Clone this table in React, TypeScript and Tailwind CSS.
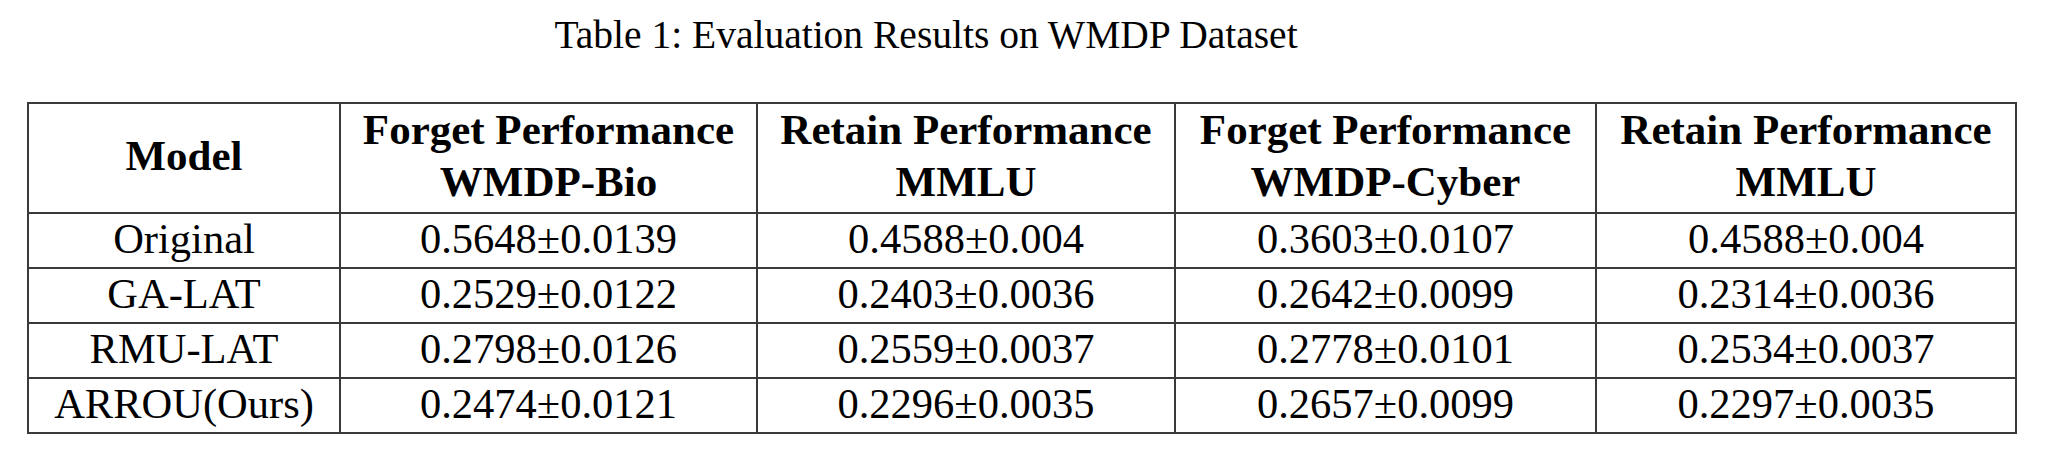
const rows = [
  { model: "Original", cells: ["0.5648±0.0139", "0.4588±0.004", "0.3603±0.0107", "0.4588±0.004"] },
  { model: "GA-LAT", cells: ["0.2529±0.0122", "0.2403±0.0036", "0.2642±0.0099", "0.2314±0.0036"] },
  { model: "RMU-LAT", cells: ["0.2798±0.0126", "0.2559±0.0037", "0.2778±0.0101", "0.2534±0.0037"] },
  { model: "ARROU(Ours)", cells: ["0.2474±0.0121", "0.2296±0.0035", "0.2657±0.0099", "0.2297±0.0035"] },
];

const headers = [
  ["Forget Performance", "WMDP-Bio"],
  ["Retain Performance", "MMLU"],
  ["Forget Performance", "WMDP-Cyber"],
  ["Retain Performance", "MMLU"],
];

export default function App() {
  return (
    <div
      className="w-[2048px] h-[455px] bg-white text-black overflow-hidden"
      style={{ fontFamily: '"Liberation Serif", "Times New Roman", serif' }}
    >
      {/* Caption */}
      <div className="w-[1852px] pt-[13px] text-center text-[39.5px] leading-[45px]">
        Table 1: Evaluation Results on WMDP Dataset
      </div>

      {/* Table */}
      <table className="mt-[44px] ml-[27px] w-[1990px] table-fixed border-collapse">
        <colgroup>
          <col className="w-[312px]" />
          <col className="w-[417px]" />
          <col className="w-[418px]" />
          <col className="w-[421px]" />
          <col className="w-[420px]" />
        </colgroup>
        <thead>
          <tr className="h-[109px]">
            <th className="border-2 border-[#3a3a3a] p-0 pb-[4px] text-[43px] leading-[52px] font-bold">Model</th>
            {headers.map((h, i) => (
              <th key={i} className="border-2 border-[#3a3a3a] p-0 pb-[4px] text-[43px] leading-[52px] font-bold">
                <div>{h[0]}</div>
                <div>{h[1]}</div>
              </th>
            ))}
          </tr>
        </thead>
        <tbody>
          {rows.map((r) => (
            <tr key={r.model} className="h-[55px]">
              <td className="border-2 border-[#3a3a3a] p-0 pb-[3px] text-center text-[42.5px] leading-[50px]">{r.model}</td>
              {r.cells.map((c, i) => (
                <td key={i} className="border-2 border-[#3a3a3a] p-0 pb-[3px] text-center text-[42.5px] leading-[50px]">
                  {c}
                </td>
              ))}
            </tr>
          ))}
        </tbody>
      </table>
    </div>
  );
}
